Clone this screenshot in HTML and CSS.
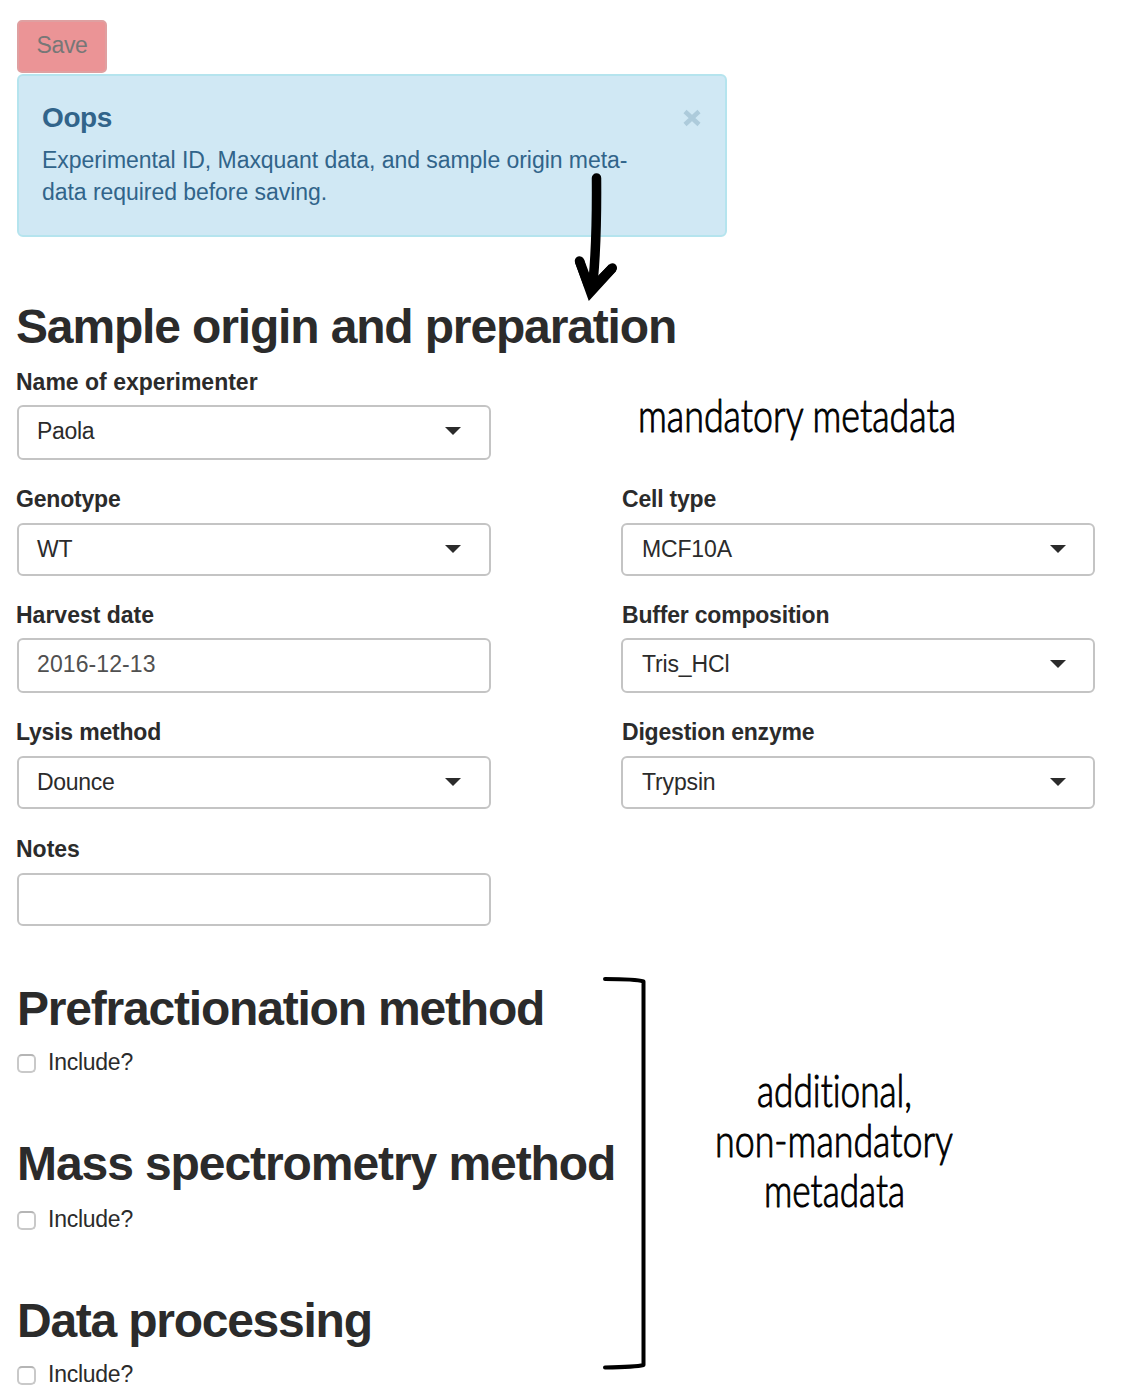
FILE: index.html
```html
<!DOCTYPE html>
<html lang="en">
<head>
<meta charset="utf-8">
<title>Sample metadata</title>
<link rel="stylesheet" href="styles.css">
</head>
<body>
<main class="page">
  <button class="save" disabled>Save</button>
  <div class="alert">
    <div class="alert-head">
      <h4 class="alert-title">Oops</h4>
      <svg class="close" width="18" height="18" viewBox="0 0 18 18"><path d="M2 2.500L16 15.500M16 2.500L2 15.500"/></svg>
    </div>
    <p class="alert-text">Experimental ID, Maxquant data, and sample origin meta-<br>data required before saving.</p>
  </div>

  <h2 class="heading heading-origin">Sample origin and preparation</h2>
  <div class="fields">
    <div class="field solo"><label class="label">Name of experimenter</label><div class="box tall"><span>Paola</span><i class="caret"></i></div></div>
    <div class="field"><label class="label tight">Genotype</label><div class="box"><span>WT</span><i class="caret"></i></div></div>
    <div class="field right"><label class="label tight">Cell type</label><div class="box"><span>MCF10A</span><i class="caret"></i></div></div>
    <div class="field"><label class="label">Harvest date</label><div class="box tall date"><span>2016-12-13</span></div></div>
    <div class="field right"><label class="label tight">Buffer composition</label><div class="box tall"><span>Tris_HCl</span><i class="caret"></i></div></div>
    <div class="field"><label class="label tight">Lysis method</label><div class="box"><span>Dounce</span><i class="caret"></i></div></div>
    <div class="field right"><label class="label tight">Digestion enzyme</label><div class="box"><span>Trypsin</span><i class="caret"></i></div></div>
    <div class="field"><label class="label">Notes</label><div class="box"></div></div>
  </div>

  <div class="optional">
    <section><h2 class="heading h-pre">Prefractionation method</h2><label class="include"><span class="check"></span>Include?</label></section>
    <section><h2 class="heading h-mass">Mass spectrometry method</h2><label class="include include-mass"><span class="check"></span>Include?</label></section>
    <section><h2 class="heading h-data">Data processing</h2><label class="include"><span class="check"></span>Include?</label></section>
  </div>

  <svg class="notes" width="1125" height="1394" viewBox="0 0 1125 1394">
    <g class="arrow">
      <path d="M596.500 178Q597 240 593.200 280"/>
      <path d="M579.500 261L588.500 285"/>
      <path d="M612.300 268L594 287"/>
      <path class="tip" d="M575 262.500L588.800 301L616 271.200L609 264.500L597 277H589L584 259.500Z"/>
    </g>
    <path class="bracket" d="M605 979Q636 979 643.500 981.500V1365Q636 1367 605 1367.500"/>
    <g class="hand">
      <text x="638" y="432" textLength="318" lengthAdjust="spacingAndGlyphs">mandatory metadata</text>
      <text x="757" y="1107" textLength="155" lengthAdjust="spacingAndGlyphs">additional,</text>
      <text x="715" y="1157" textLength="238" lengthAdjust="spacingAndGlyphs">non-mandatory</text>
      <text x="764" y="1207" textLength="141" lengthAdjust="spacingAndGlyphs">metadata</text>
    </g>
  </svg>
</main>
</body>
</html>
```

FILE: styles.css
```css
* { box-sizing: border-box; }
body {
  margin: 0;
  background: #fff;
  color: #2b2b2b;
  font: 23px/32px "Liberation Sans", Arial, sans-serif;
}
.page {
  position: relative;
  display: flex;
  flex-direction: column;
  align-items: flex-start;
  width: 1125px;
  height: 1394px;
  padding: 20px 0 0 17px;
  overflow: hidden;
}
.save {
  width: 90px;
  height: 53px;
  margin: 0;
  padding: 0 0 3px;
  border: 2px solid #dfa0a1;
  border-radius: 5px;
  background: #eb9496;
  color: #777;
  font: inherit;
  letter-spacing: -0.3px;
}
.alert {
  width: 710px;
  height: 163px;
  margin-top: 1px;
  padding: 26px 24px 0 23px;
  border: 2px solid #b5e4ee;
  border-radius: 6px;
  background: #d0e8f4;
  color: #31648a;
}
.alert-head {
  display: flex;
  justify-content: space-between;
  height: 42px;
}
.alert-title {
  margin: 0;
  font-size: 28px;
  letter-spacing: -0.4px;
}
.close { margin-top: 7px; }
.close path { stroke: #adcbdb; stroke-width: 4.5; }
.alert-text { margin: 0; letter-spacing: -0.05px; }

.heading {
  margin: 0;
  font-size: 48px;
  line-height: 53px;
  letter-spacing: -1.15px;
  white-space: nowrap;
}
.heading-origin { margin: 63px 0 13px -1px; }
.h-pre { letter-spacing: -1.2px; }
.h-mass { letter-spacing: -1.08px; }
.h-data { letter-spacing: -1.25px; }
.fields {
  display: grid;
  grid-template-columns: 474px 474px;
  grid-template-rows: 117px 116px 117px 117px 93px;
  column-gap: 130px;
}
.field { display: flex; flex-direction: column; }
.solo { grid-column: 1 / 3; width: 474px; }
.label { margin-left: -1px; font-weight: bold; }
.right .label { margin-left: 1px; }
.label.tight { letter-spacing: -0.2px; }
.box {
  display: flex;
  justify-content: space-between;
  align-items: center;
  height: 53px;
  margin-top: 8px;
  padding: 0 28px 2px 18px;
  border: 2px solid #c4c4c4;
  border-radius: 6px;
  letter-spacing: -0.3px;
}
.right .box { padding-left: 19px; padding-right: 27px; letter-spacing: -0.15px; }
.tall { height: 55px; margin-top: 7px; padding-bottom: 3px; }
.date { color: #505050; letter-spacing: 0.1px; }
.caret {
  border: 8px solid transparent;
  border-top: 8px solid #2b2b2b;
  border-bottom: 0;
}

.optional {
  display: grid;
  grid-template-rows: 155px 157px 100px;
  margin-top: 56px;
}
.include {
  display: flex;
  align-items: center;
  gap: 12px;
  margin-top: 11px;
  letter-spacing: -0.25px;
}
.include-mass { margin-top: 13px; }
.check {
  width: 19px;
  height: 19px;
  margin-top: 3px;
  border: 2px solid #c9c9c9;
  border-top-color: #b5b5b5;
  border-radius: 5px;
}

.notes { position: absolute; top: 0; left: 0; }
.arrow path { fill: none; stroke: #000; stroke-width: 9.5; stroke-linecap: round; }
.arrow .tip { fill: #000; stroke: none; }
.bracket { fill: none; stroke: #000; stroke-width: 4; stroke-linecap: round; stroke-linejoin: round; }
.hand {
  fill: #000;
  stroke: #000;
  stroke-width: 1;
  stroke-linejoin: round;
  font: 300 45px Lato, sans-serif;
  font-variant-ligatures: none;
}
```
